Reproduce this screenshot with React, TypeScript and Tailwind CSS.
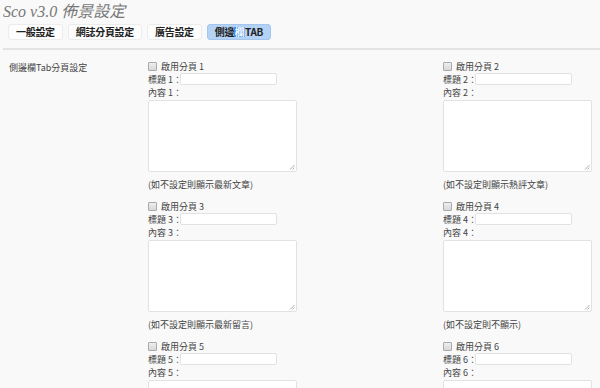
import React from 'react';

const cjk = { fontFamily: '"Noto Sans CJK TC", "Noto Sans", sans-serif' };

const notes = [
  '(如不設定則顯示最新文章)',
  '(如不設定則顯示熱評文章)',
  '(如不設定則顯示最新留言)',
  '(如不設定則不顯示)',
  '',
  '',
];

const TabBlock = ({ n, note }: { n: number; note: string }) => (
  <div className="flex flex-col w-[295px] pb-[11px] text-[9px] leading-none text-[#444]">
    <div className="h-[11px] flex items-center gap-[4px]">
      <span className="w-[9px] h-[9px] border border-[#aaa] bg-gradient-to-b from-[#eee] to-[#d8d8d8] rounded-[1px]" />
      <span>啟用分頁 {n}</span>
    </div>
    <div className="mt-[1px] h-[12px] flex items-center">
      <span className="shrink-0 whitespace-nowrap w-[32px]">標題 {n}：</span>
      <div className="w-[97px] h-[12px] bg-white border border-[#e2e2e2] rounded-[2px]" />
    </div>
    <div className="h-[14px] flex items-center whitespace-nowrap">內容 {n}：</div>
    <div className="mt-[1px] relative w-[149px] h-[72px] bg-white border border-[#e2e2e2] rounded-[2px]">
      <svg className="absolute right-[1px] bottom-[1px]" width="6" height="6" viewBox="0 0 6 6">
        <path d="M1 5.5 L5.5 1 M3.5 5.5 L5.5 3.5" stroke="#999" strokeWidth="0.8" />
      </svg>
    </div>
    <div className="mt-[6px] h-[12px] flex items-center whitespace-nowrap">{note}</div>
  </div>
);

const tabs = ['一般設定', '網誌分頁設定', '廣告設定'];

export default function App() {
  return (
    <div className="w-[600px] h-[388px] overflow-hidden bg-[#f9f9f9]" style={cjk}>
      <div className="pl-[3px] pt-[3px] h-[20px] flex items-center">
        <span className="text-[16px] italic text-[#777] leading-none whitespace-nowrap" style={{ fontFamily: '"Liberation Serif", "Noto Sans CJK TC", serif' }}>
          Sco v3.0 佈景設定
        </span>
      </div>
      <div className="mt-[4px] pl-[8px] flex gap-[5px] h-[16px]">
        {tabs.map((t) => (
          <div key={t} className="px-[7px] h-[16px] flex items-center text-[10px] font-bold text-[#222] bg-[#fdfdfd] border border-[#ececec] rounded-[3px] leading-none whitespace-nowrap tracking-[-0.3px]">
            {t}
          </div>
        ))}
        <div className="px-[7px] h-[16px] flex items-center text-[10px] font-bold text-[#222] bg-[#b4d2f4] border border-[#a3c5ee] rounded-[3px] leading-none whitespace-nowrap tracking-[-0.3px]">
          側邊<span className="bg-[#3a8cf0] text-white px-[0.5px]">欄</span>TAB
        </div>
      </div>
      <div className="mt-[8px] ml-[3px] h-[2px] bg-[#e3e3e3]" />
      <div className="flex pt-[11px]">
        <div className="w-[148px] shrink-0 pl-[9px] pt-[1px] text-[9px] leading-[11px] text-[#444] whitespace-nowrap">側邊欄Tab分頁設定</div>
        <div className="grid grid-cols-[295px_152px]">
          {[1, 2, 3, 4, 5, 6].map((n) => (
            <TabBlock key={n} n={n} note={notes[n - 1]} />
          ))}
        </div>
      </div>
    </div>
  );
}
